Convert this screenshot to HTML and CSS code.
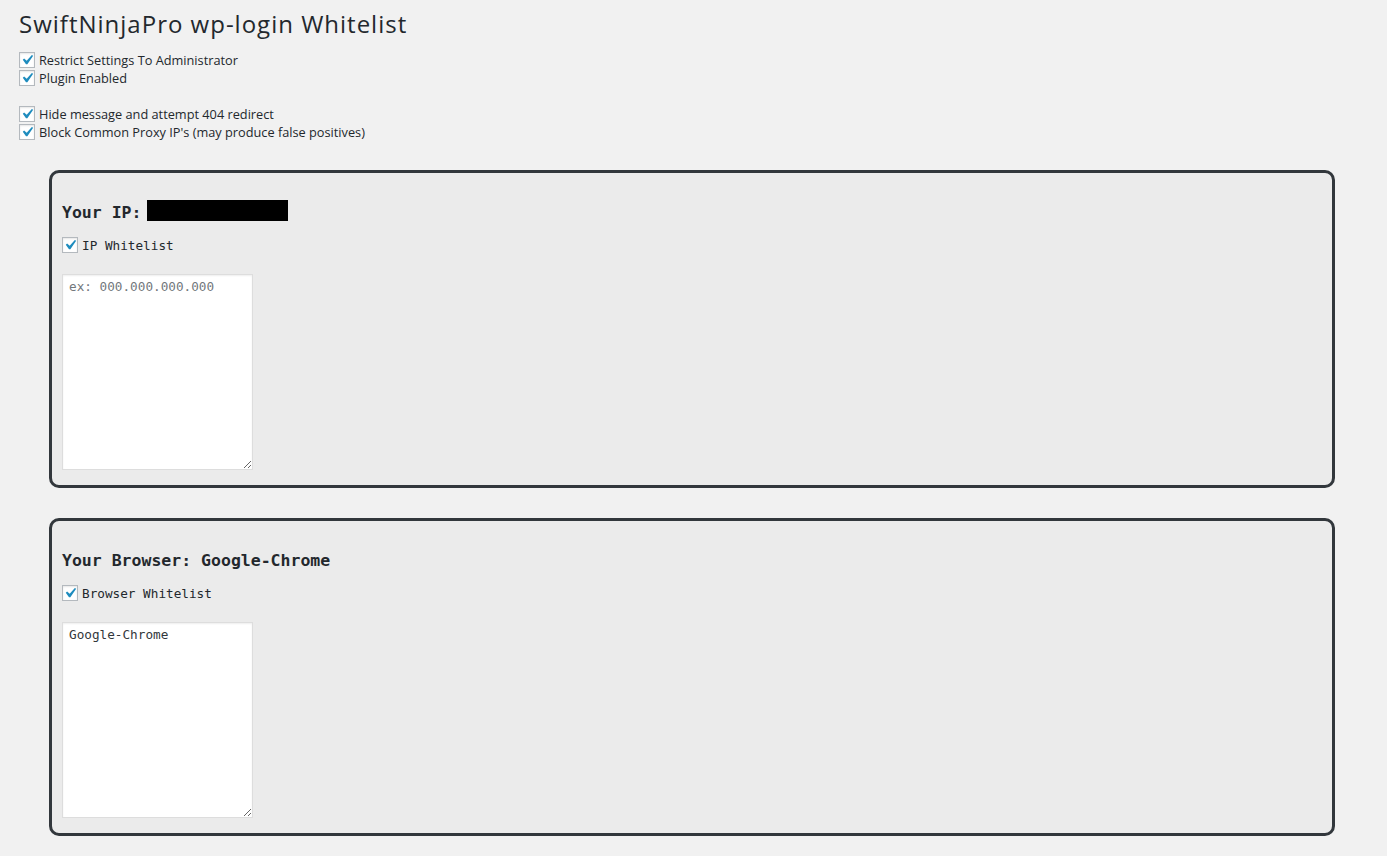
FILE: index.html
```html
<!DOCTYPE html>
<html>
<head>
<meta charset="utf-8">
<title>SwiftNinjaPro wp-login Whitelist</title>
<link rel="stylesheet" href="styles.css">
</head>
<body>
<div class="wrap">
  <h1 class="title">SwiftNinjaPro wp-login Whitelist</h1>
  <div class="opts">
    <label class="row"><span class="cb"><svg viewBox="0 0 20 20"><path d="M14.83 4.89l1.34.94-5.81 8.38H9.02L5.78 9.67l1.34-1.25 2.57 2.4z"/></svg></span>Restrict Settings To Administrator</label>
    <label class="row"><span class="cb"><svg viewBox="0 0 20 20"><path d="M14.83 4.89l1.34.94-5.81 8.38H9.02L5.78 9.67l1.34-1.25 2.57 2.4z"/></svg></span>Plugin Enabled</label>
  </div>
  <div class="opts">
    <label class="row"><span class="cb"><svg viewBox="0 0 20 20"><path d="M14.83 4.89l1.34.94-5.81 8.38H9.02L5.78 9.67l1.34-1.25 2.57 2.4z"/></svg></span>Hide message and attempt 404 redirect</label>
    <label class="row"><span class="cb"><svg viewBox="0 0 20 20"><path d="M14.83 4.89l1.34.94-5.81 8.38H9.02L5.78 9.67l1.34-1.25 2.57 2.4z"/></svg></span>Block Common Proxy IP's (may produce false positives)</label>
  </div>

  <section class="panel">
    <h3 class="panel-title"><span class="lbl">Your IP:</span> <span class="redact"></span></h3>
    <label class="row mono"><span class="cb"><svg viewBox="0 0 20 20"><path d="M14.83 4.89l1.34.94-5.81 8.38H9.02L5.78 9.67l1.34-1.25 2.57 2.4z"/></svg></span>IP Whitelist</label>
    <textarea class="list" placeholder="ex: 000.000.000.000"></textarea>
  </section>

  <section class="panel">
    <h3 class="panel-title"><span class="lbl">Your Browser: Google-Chrome</span></h3>
    <label class="row mono"><span class="cb"><svg viewBox="0 0 20 20"><path d="M14.83 4.89l1.34.94-5.81 8.38H9.02L5.78 9.67l1.34-1.25 2.57 2.4z"/></svg></span>Browser Whitelist</label>
    <textarea class="list">Google-Chrome</textarea>
  </section>
</div>
</body>
</html>
```
FILE: styles.css
```css
html, body {
  margin: 0;
  padding: 0;
  background: #f1f1f1;
}
body {
  font-family: "Open Sans", "Noto Sans", sans-serif;
  color: #23282d;
  font-size: 12.75px;
}
.wrap {
  padding: 0 20px 0 19px;
}
.title {
  margin: 0 0 12px;
  padding-top: 9px;
  font-size: 24px;
  font-weight: 400;
  letter-spacing: 1px;
  line-height: 30px;
  color: #23282d;
}
.opts {
  display: flex;
  flex-direction: column;
  margin-bottom: 18px;
}
.opts:last-of-type {
  margin-bottom: 29px;
}
.row {
  display: flex;
  align-items: center;
  height: 18px;
  gap: 4px;
}
.cb {
  position: relative;
  width: 14px;
  height: 14px;
  border: 1px solid #b4b9be;
  background: #fff;
  box-shadow: inset 0 1px 2px rgba(0,0,0,.1);
  flex: none;
}
.cb svg {
  position: absolute;
  left: -3px;
  top: -3px;
  width: 20px;
  height: 20px;
  fill: #1e8cbe;
}
.panel {
  margin: 0 32px 30px 30px;
  border: 3px solid #32373c;
  border-radius: 10px;
  background: #ebebeb;
  padding: 27px 10px 15px;
}
.panel-title {
  margin: 0 0 16px;
  font-family: "DejaVu Sans Mono", "Liberation Mono", monospace;
  font-weight: 700;
  font-size: 16.5px;
  line-height: 21px;
  height: 21px;
  display: flex;
  align-items: center;
  gap: 6px;
  color: #23282d;
}
.panel-title .lbl {
  padding-top: 3px;
}
.redact {
  display: inline-block;
  width: 141px;
  height: 21px;
  background: #000;
}
.row.mono {
  height: 16px;
  font-family: "DejaVu Sans Mono", "Liberation Mono", monospace;
  font-size: 12.7px;
  margin-bottom: 21px;
}
.list {
  display: block;
  box-sizing: border-box;
  width: 191px;
  height: 196px;
  margin: 0;
  padding: 4px 6px;
  border: 1px solid #ddd;
  box-shadow: inset 0 1px 2px rgba(0,0,0,.07);
  background: #fff;
  font-family: "DejaVu Sans Mono", "Liberation Mono", monospace;
  font-size: 12.7px;
  line-height: 16px;
  color: #32373c;
  outline: none;
}
.list::placeholder {
  color: #72777c;
}
```
